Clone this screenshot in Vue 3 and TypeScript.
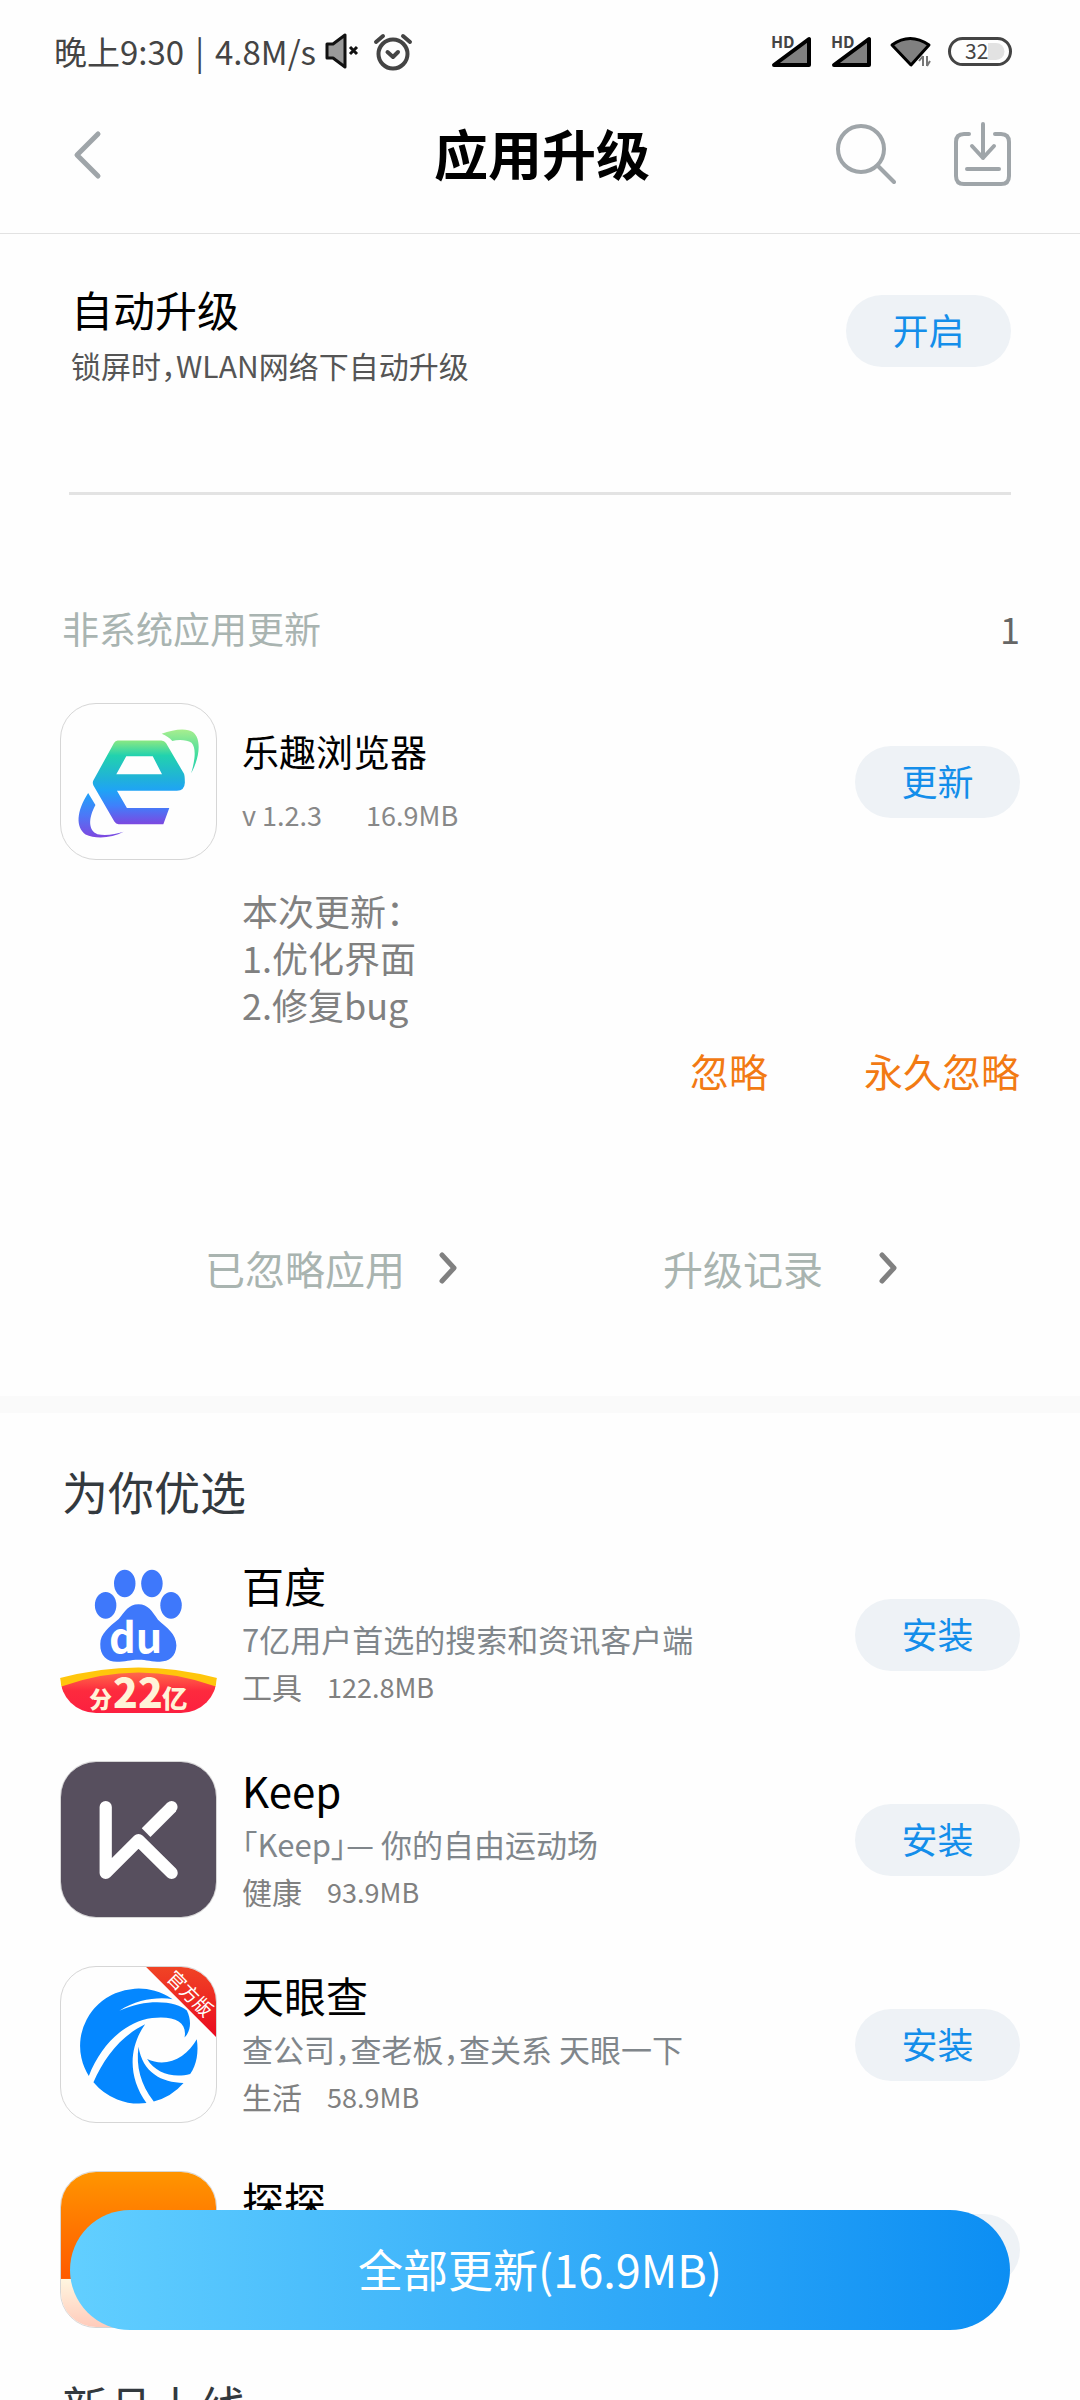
<script setup lang="ts">
import { ref } from 'vue'

interface StoreApp {
  id: 'baidu' | 'keep' | 'tianyancha' | 'tantan'
  name: string
  intro: string
  category: string
  size: string
}

const notes: string[] = ['本次更新：', '1.优化界面', '2.修复bug']

const picks = ref<StoreApp[]>([
  { id: 'baidu', name: '百度', intro: '7亿用户首选的搜索和资讯客户端', category: '工具', size: '122.8MB' },
  { id: 'keep', name: 'Keep', intro: '「Keep」— 你的自由运动场', category: '健康', size: '93.9MB' },
  { id: 'tianyancha', name: '天眼查', intro: '查公司，查老板，查关系 天眼一下', category: '生活', size: '58.9MB' },
  { id: 'tantan', name: '探探', intro: '', category: '', size: '' },
])
</script>

<template>
  <div class="app">
    <div class="status">
      <div class="status-side">
        <div class="clock"><span>晚上9:30</span><span>|</span><span>4.8M/s</span></div>
        <svg class="mute" width="36" height="38" viewBox="0 0 36 38" aria-hidden="true">
          <path d="M3 12H9L21 3V35L9 26H3Z" fill="#999" stroke="#111" stroke-width="3" stroke-linejoin="round" />
          <path d="M26 15L33 22M33 15L26 22" stroke="#111" stroke-width="3" />
        </svg>
        <svg class="alarm" width="40" height="40" viewBox="0 0 40 40" aria-hidden="true">
          <g fill="none" stroke="#444" stroke-width="4" stroke-linecap="round" stroke-linejoin="round">
            <circle cx="20" cy="23" r="14.500" />
            <path d="M14.500 21L20 26L25 21M3 11L10 5M37 11L30 5" />
          </g>
        </svg>
      </div>
      <div class="status-side right">
        <svg v-for="n in 2" :key="n" width="44" height="34" viewBox="0 0 44 34" aria-hidden="true">
          <text x="1" y="14" class="hd">HD</text>
          <path d="M4 31L39 5V31Z" fill="#808080" stroke="#000" stroke-width="4" stroke-linejoin="round" />
        </svg>
        <svg width="42" height="34" viewBox="0 0 42 34" aria-hidden="true">
          <path d="M2 11Q20 -2 39 11L21 31Z" fill="#808080" stroke="#000" stroke-width="3" stroke-linejoin="round" />
          <path d="M33 22V32M29 27L33 22M37 32V22M37 32L40 27" stroke="#777" stroke-width="2" fill="none" />
        </svg>
        <svg width="64" height="30" viewBox="0 0 64 30" aria-hidden="true">
          <path d="M40 7H48A8 8 0 0 1 48 24H40Z" fill="#e2e2e2" />
          <rect x="1.500" y="2.500" width="61" height="26" rx="13" fill="none" stroke="#444" stroke-width="3" />
          <text x="17" y="23" class="level">32</text>
        </svg>
      </div>
    </div>

    <header class="bar">
      <button class="icon-btn" aria-label="返回">
        <svg width="30" height="50" viewBox="0 0 30 50">
          <path d="M26 4L5 25L26 46" class="line thick" />
        </svg>
      </button>
      <h1>应用升级</h1>
      <div class="tools">
        <button class="icon-btn" aria-label="搜索">
          <svg width="60" height="66" viewBox="0 0 60 66">
            <circle cx="25" cy="27" r="23" class="line" />
            <path d="M42 44L58 60" class="line" />
          </svg>
        </button>
        <button class="icon-btn" aria-label="下载管理">
          <svg width="60" height="66" viewBox="0 0 60 66">
            <path d="M17 12H12Q4 12 4 20V54Q4 62 12 62H49Q57 62 57 54V20Q57 12 49 12H43" class="line" />
            <path d="M31 2V36M20 24L31 36L42 24M15 47H47" class="line" />
          </svg>
        </button>
      </div>
    </header>

    <main class="content">
      <section class="auto">
        <div class="auto-text">
          <h2>自动升级</h2>
          <p>锁屏时，WLAN网络下自动升级</p>
        </div>
        <button class="pill">开启</button>
      </section>

      <section class="updates">
        <div class="updates-head">
          <h2>非系统应用更新</h2>
          <span>1</span>
        </div>
        <div class="row">
          <div class="icon framed">
            <svg viewBox="0 0 468 468" aria-hidden="true">
              <defs>
                <linearGradient id="e-body" gradientUnits="userSpaceOnUse" x1="0" y1="110" x2="0" y2="363">
                  <stop offset="0" stop-color="#8ae882" />
                  <stop offset="0.180" stop-color="#22d2ae" />
                  <stop offset="0.450" stop-color="#20b2d8" />
                  <stop offset="0.600" stop-color="#1fa3f6" />
                  <stop offset="0.780" stop-color="#3f80fb" />
                  <stop offset="1" stop-color="#7c48e0" />
                </linearGradient>
                <linearGradient id="e-top" x1="0" y1="0" x2="0" y2="1">
                  <stop offset="0" stop-color="#a8ee8e" />
                  <stop offset="0.600" stop-color="#3fdc9f" />
                  <stop offset="1" stop-color="#2fd0b4" />
                </linearGradient>
                <linearGradient id="e-low" x1="0" y1="0" x2="0" y2="1">
                  <stop offset="0" stop-color="#1fa3fa" />
                  <stop offset="0.500" stop-color="#4c78f7" />
                  <stop offset="1" stop-color="#7f48e0" />
                </linearGradient>
              </defs>
              <path fill="url(#e-body)" fill-rule="evenodd" d="M171 110H303Q312 110 317 118L371 210Q374 216 374 238Q373 262 350 262H169L199 314H327L309 363H174Q166 363 161 355L98 246Q94 238 98 230L160 118Q164 110 171 110ZM197 158L167 212H305L277 158Z" />
              <path fill="url(#e-top)" d="M304 90C340 76 380 72 399 85C424 105 420 160 393 209C406 165 408 132 394 117C380 108 354 107 336 112C328 102 318 96 304 90Z" />
              <path fill="url(#e-low)" d="M82 269L104 305C82 345 82 382 110 393C135 399 164 393 189 386C154 405 104 408 74 394C44 372 46 325 82 269Z" />
            </svg>
          </div>
          <div class="info update-info">
            <h3>乐趣浏览器</h3>
            <p class="version"><span>v 1.2.3</span><span>16.9MB</span></p>
          </div>
          <button class="pill">更新</button>
        </div>
        <div class="notes">
          <p v-for="line in notes" :key="line">{{ line }}</p>
        </div>
        <div class="actions">
          <button>忽略</button>
          <button>永久忽略</button>
        </div>
        <nav class="links">
          <a href="#ignored">
            已忽略应用
            <svg width="20" height="34" viewBox="0 0 20 34" aria-hidden="true"><path d="M3 4L15 17L3 30" /></svg>
          </a>
          <a href="#history">
            升级记录
            <svg width="20" height="34" viewBox="0 0 20 34" aria-hidden="true"><path d="M3 4L15 17L3 30" /></svg>
          </a>
        </nav>
      </section>

      <section class="picks">
        <h2>为你优选</h2>
        <ul>
          <li v-for="app in picks" :key="app.id" class="row">
            <div class="icon" :class="{ framed: app.id !== 'baidu' }">
              <svg v-if="app.id === 'baidu'" viewBox="0 0 468 468" aria-hidden="true">
                <defs>
                  <linearGradient id="bd-red" x1="0" y1="0" x2="0" y2="1">
                    <stop offset="0" stop-color="#ff6a4a" />
                    <stop offset="0.450" stop-color="#fd2a3e" />
                    <stop offset="1" stop-color="#fc1f40" />
                  </linearGradient>
                </defs>
                <g fill="#3e78fb">
                  <ellipse cx="193" cy="82" rx="32" ry="41" />
                  <ellipse cx="274" cy="82" rx="32" ry="41" />
                  <ellipse cx="136" cy="147" rx="32" ry="40" />
                  <ellipse cx="331" cy="147" rx="32" ry="40" />
                  <path d="M234 144C263 144 274 165 292 190C318 214 347 232 347 267C346 300 324 315 298 315C274 315 258 309 234 309C210 309 194 315 169 315C140 315 119 297 120 262C120 232 146 212 175 188C194 165 204 144 234 144Z" />
                </g>
                <text x="146" y="288" class="du">du</text>
                <path fill="#ffc60c" d="M0 364Q234 300 468 364L464 390H4Z" />
                <path fill="url(#bd-red)" d="M4 389Q234 305 465 389C454 432 425 470 364 470H104C44 470 12 432 4 389Z" />
                <text y="452" class="promo"><tspan x="87" class="promo-sm">分</tspan><tspan x="158" class="promo-lg">22</tspan><tspan x="304" class="promo-md">亿</tspan></text>
              </svg>
              <svg v-else-if="app.id === 'keep'" viewBox="0 0 468 468" aria-hidden="true">
                <rect width="468" height="468" fill="#574f5e" />
                <g fill="none" stroke="#fff" stroke-width="37" stroke-linejoin="round">
                  <path stroke-linecap="round" d="M135 136V335L234 236L334 335" />
                  <path d="M334 136L257 213" />
                </g>
                <circle cx="334" cy="136" r="18" fill="#fff" />
              </svg>
              <svg v-else-if="app.id === 'tianyancha'" viewBox="0 0 468 468" aria-hidden="true">
                <defs>
                  <linearGradient id="ty-red" x1="0" y1="0" x2="0" y2="1">
                    <stop offset="0" stop-color="#f04425" />
                    <stop offset="1" stop-color="#ea0a20" />
                  </linearGradient>
                </defs>
                <g fill="#0487ff">
                  <path d="M84 329C120 236 190 166 275 154C345 146 382 168 373 213C392 194 395 162 380 131C350 104 262 92 176 132C230 98 290 90 337 97A177 173 0 0 0 84 329Z" />
                  <path d="M254 173C206 240 200 330 258 411A177 173 0 0 1 98 348C130 275 180 208 254 173Z" />
                  <path d="M234 241C246 318 304 350 370 350A177 173 0 0 1 280 406C240 355 226 300 234 241Z" />
                  <path d="M260 278C320 306 380 272 410 218C416 255 410 296 390 323C340 336 286 322 260 278Z" />
                </g>
                <path fill="url(#ty-red)" d="M257 0H468V211Z" />
                <text x="389" y="101" transform="rotate(45 389 81)" class="ribbon">官方版</text>
              </svg>
              <svg v-else viewBox="0 0 468 468" aria-hidden="true">
                <defs>
                  <linearGradient id="tt-top" x1="0" y1="0" x2="0" y2="1">
                    <stop offset="0" stop-color="#ff9500" />
                    <stop offset="1" stop-color="#ff5a00" />
                  </linearGradient>
                  <linearGradient id="tt-low" x1="0" y1="0" x2="0" y2="1">
                    <stop offset="0" stop-color="#fff6e0" />
                    <stop offset="1" stop-color="#ffcbbb" />
                  </linearGradient>
                </defs>
                <rect width="468" height="323" fill="url(#tt-top)" />
                <rect y="323" width="468" height="145" fill="url(#tt-low)" />
              </svg>
            </div>
            <div class="info">
              <h3>{{ app.name }}</h3>
              <p class="intro">{{ app.intro }}</p>
              <p class="meta"><span>{{ app.category }}</span><span class="size">{{ app.size }}</span></p>
            </div>
            <button class="pill">安装</button>
          </li>
        </ul>
      </section>

      <section class="picks fresh">
        <h2>新品上线</h2>
      </section>
    </main>

    <button class="update-all">全部更新(16.9MB)</button>
  </div>
</template>

<style>
body {
  margin: 0;
  background: #fefefe;
}
</style>

<style scoped>
.app {
  height: 100vh;
  display: flex;
  flex-direction: column;
  background: #fefefe;
  color: #000;
  font-family: "Noto Sans CJK SC", "Noto Sans", sans-serif;
  font-feature-settings: "halt";
}

h1,
h2,
h3,
p,
ul {
  margin: 0;
  padding: 0;
  font-weight: 400;
}

ul {
  list-style: none;
}

button {
  padding: 0;
  border: 0;
  background: none;
  color: inherit;
  font-family: inherit;
}

svg {
  display: block;
  flex: none;
}

.status {
  flex: none;
  display: flex;
  justify-content: space-between;
  align-items: center;
  height: 50px;
  padding: 26px 68px 0 54px;
}

.status-side {
  display: flex;
  align-items: center;
}

.status-side.right {
  gap: 16px;
}

.status-side svg {
  overflow: visible;
}

.clock {
  display: flex;
  gap: 11px;
  font-size: 33px;
  line-height: 50px;
  color: #444;
}

.mute {
  margin-left: 8px;
}

.alarm {
  margin-left: 13px;
}

.hd {
  font-size: 16px;
  font-weight: 700;
  fill: #444;
}

.level {
  font-size: 21px;
  fill: #444;
}

.bar {
  flex: none;
  display: grid;
  grid-template-columns: 1fr auto 1fr;
  align-items: center;
  height: 157px;
  padding: 0 68px 0 72px;
  border-bottom: 1px solid #e2e2e2;
}

.bar h1 {
  padding-bottom: 4px;
  font-size: 54px;
  line-height: 80px;
  font-weight: 700;
}

.icon-btn {
  justify-self: start;
}

.tools {
  display: flex;
  justify-content: flex-end;
  gap: 56px;
}

.line {
  fill: none;
  stroke: #9fa5a9;
  stroke-width: 4;
  stroke-linecap: round;
  stroke-linejoin: round;
}

.line.thick {
  stroke-width: 5;
}

.content {
  flex: 1;
  min-height: 0;
  overflow-y: auto;
  scrollbar-width: none;
}

.auto {
  display: flex;
  justify-content: space-between;
  align-items: flex-start;
  margin: 0 69px;
  padding: 47px 0 99px;
  border-bottom: 3px solid #e3e3e3;
}

.auto-text {
  padding-left: 2px;
}

.auto h2 {
  font-size: 42px;
  line-height: 56px;
}

.auto p {
  font-size: 30px;
  line-height: 56px;
  color: #555;
}

.auto .pill {
  margin-top: 14px;
}

.pill {
  flex: none;
  box-sizing: border-box;
  width: 165px;
  height: 72px;
  padding-bottom: 4px;
  border-radius: 36px;
  background: #eef2f6;
  color: #148eea;
  font-size: 36px;
}

.updates {
  padding: 108px 60px 97px;
}

.updates-head {
  display: flex;
  justify-content: space-between;
  margin-bottom: 50px;
  padding-left: 2px;
  font-size: 36px;
  line-height: 50px;
  color: #666;
}

.updates-head h2 {
  font-size: 37px;
  color: #a9b4b1;
}

.row {
  display: flex;
  align-items: center;
  gap: 25px;
}

.icon {
  flex: none;
  box-sizing: border-box;
  width: 157px;
  height: 157px;
  border-radius: 36px;
  overflow: hidden;
}

.icon svg {
  width: 100%;
  height: 100%;
}

.framed {
  border: 1px solid #d6d6d6;
}

.info {
  flex: 1;
  min-width: 0;
  padding-bottom: 4px;
}

.info h3 {
  font-size: 42px;
  line-height: 58px;
}

.update-info {
  padding: 2px 0 0;
}

.update-info h3 {
  font-size: 37px;
  line-height: 64px;
}

.version {
  display: flex;
  gap: 44px;
  font-size: 27px;
  line-height: 64px;
  color: #888;
}

.notes {
  margin: 27px 0 15px 182px;
  font-size: 36px;
  line-height: 47px;
  color: #808080;
}

.actions {
  display: flex;
  justify-content: flex-end;
  gap: 96px;
}

.actions button {
  font-size: 39px;
  line-height: 54px;
  color: #f27a13;
}

.links {
  display: flex;
  justify-content: space-between;
  margin-top: 141px;
  padding: 0 121px 1px 145px;
}

.links a {
  display: flex;
  align-items: center;
  justify-content: space-between;
  gap: 34px;
  min-width: 236px;
  font-size: 40px;
  line-height: 60px;
  color: #a9b4b0;
  text-decoration: none;
}

.links path {
  fill: none;
  stroke: #808080;
  stroke-width: 5;
  stroke-linecap: round;
  stroke-linejoin: round;
}

.picks {
  padding: 44px 60px 0;
  border-top: 17px solid #fafafa;
}

.picks h2 {
  margin-bottom: 33px;
  padding-left: 2px;
  font-size: 46px;
  line-height: 66px;
  color: #33393e;
}

.picks ul {
  display: flex;
  flex-direction: column;
  gap: 48px;
}

.fresh {
  border-top: 0;
}

.intro {
  height: 50px;
  font-size: 31px;
  line-height: 50px;
  color: #80868b;
  white-space: nowrap;
}

.meta {
  display: flex;
  gap: 25px;
  height: 45px;
  font-size: 30px;
  line-height: 45px;
  color: #808080;
}

.size {
  font-size: 27px;
}

.du {
  font-size: 124px;
  font-weight: 700;
  fill: #fff;
}

.promo {
  font-weight: 900;
  fill: #fff3d8;
}

.promo-sm {
  font-size: 68px;
}

.promo-md {
  font-size: 76px;
}

.promo-lg {
  font-size: 122px;
}

.ribbon {
  font-size: 56px;
  fill: #fff;
  text-anchor: middle;
}

.update-all {
  position: fixed;
  left: 70px;
  right: 70px;
  bottom: 70px;
  height: 120px;
  padding-bottom: 4px;
  border-radius: 60px;
  background: linear-gradient(90deg, #62cfff, #0c8ef3);
  color: #fff;
  font-size: 45px;
}
</style>
